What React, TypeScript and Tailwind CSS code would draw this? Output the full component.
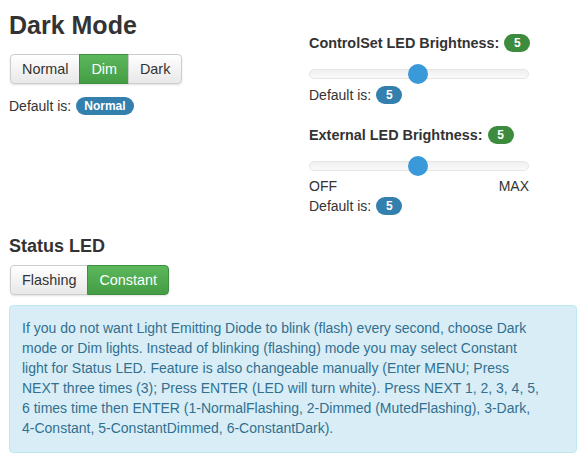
import React from 'react'

function Badge({ children, color }: { children: React.ReactNode; color: 'blue' | 'green' }) {
  return (
    <span
      className={
        'inline-flex h-[18px] min-w-[26px] items-center justify-center rounded-full px-[8px] text-[12px] font-bold leading-none text-white ' +
        (color === 'blue' ? 'bg-[#337fad]' : 'bg-[#3d8b3d]')
      }
    >
      {children}
    </span>
  )
}

function BtnGroup({ items, active }: { items: string[]; active: string }) {
  return (
    <div className="inline-flex rounded-[4px] shadow-[0_1px_2px_rgba(0,0,0,0.12)]">
      {items.map((it, i) => {
        const on = it === active
        return (
          <div
            key={it}
            className={
              'flex h-[30px] items-center border px-[11px] text-[14.4px] ' +
              (i === 0 ? 'rounded-l-[4px] ' : '') +
              (i === items.length - 1 ? 'rounded-r-[4px] ' : '') +
              (i > 0 ? '-ml-px ' : '') +
              (on
                ? 'border-[#3e8f3e] bg-gradient-to-b from-[#5cb85c] to-[#449d44] text-white'
                : 'border-[#cccccc] bg-gradient-to-b from-white to-[#e8e8e8] text-[#333]')
            }
          >
            {it}
          </div>
        )
      })}
    </div>
  )
}

function Slider() {
  return (
    <div className="relative h-[20px] w-[220px]">
      <div className="absolute left-0 right-0 top-[5px] h-[10px] rounded-full border border-[#e6e6e6] bg-gradient-to-b from-[#f0f0f0] to-[#fafafa]" />
      <div className="absolute left-[99px] top-0 h-[20px] w-[20px] rounded-full bg-[#3a9ad9]" />
    </div>
  )
}

export default function App() {
  return (
    <div
      className="h-[468px] w-[581px] bg-white text-[14px] leading-[20px] text-[#333]"
      style={{ fontFamily: '"Liberation Sans", Arial, sans-serif' }}
    >
      <div className="flex px-[9px] pt-[10px]">
        <div className="w-[300px]">
          <h1 className="text-[25px] font-bold leading-[30px]">Dark Mode</h1>
          <div className="mt-[14px] ml-px">
            <BtnGroup items={['Normal', 'Dim', 'Dark']} active="Dim" />
          </div>
          <div className="mt-[12px] flex items-center gap-[5px]">
            <span>Default is:</span>
            <Badge color="blue">Normal</Badge>
          </div>
        </div>
        <div className="w-[240px] pt-[23px]">
          <div className="flex items-center gap-[5px] text-[14.4px] font-bold">
            <span>ControlSet LED Brightness:</span>
            <Badge color="green">5</Badge>
          </div>
          <div className="mt-[11px]">
            <Slider />
          </div>
          <div className="mt-px flex items-center gap-[5px]">
            <span>Default is:</span>
            <Badge color="blue">5</Badge>
          </div>
          <div className="mt-[20px] flex items-center gap-[5px] text-[14.4px] font-bold">
            <span>External LED Brightness:</span>
            <Badge color="green">5</Badge>
          </div>
          <div className="mt-[11px]">
            <Slider />
          </div>
          <div className="flex w-[220px] justify-between">
            <span>OFF</span>
            <span>MAX</span>
          </div>
          <div className="flex items-center gap-[5px]">
            <span>Default is:</span>
            <Badge color="blue">5</Badge>
          </div>
        </div>
      </div>
      <div className="px-[9px]">
        <h2 className="mt-[19px] text-[18px] font-bold leading-[22px]">Status LED</h2>
        <div className="mt-[8px] ml-px">
          <BtnGroup items={['Flashing', 'Constant']} active="Constant" />
        </div>
        <div className="mt-[10px] w-[568px] rounded-[4px] border border-[#bce8f1] bg-[#d9edf7] px-[12px] pb-[14px] pt-[12px] text-[#31708f]">
          <p className="w-[542px]">
            If you do not want Light Emitting Diode to blink (flash) every second, choose Dark
            <br />
            mode or Dim lights. Instead of blinking (flashing) mode you may select Constant
            <br />
            light for Status LED. Feature is also changeable manually (Enter MENU; Press
            <br />
            NEXT three times (3); Press ENTER (LED will turn white). Press NEXT 1, 2, 3, 4, 5,
            <br />
            6 times time then ENTER (1-NormalFlashing, 2-Dimmed (MutedFlashing), 3-Dark,
            <br />
            4-Constant, 5-ConstantDimmed, 6-ConstantDark).
          </p>
        </div>
      </div>
    </div>
  )
}
